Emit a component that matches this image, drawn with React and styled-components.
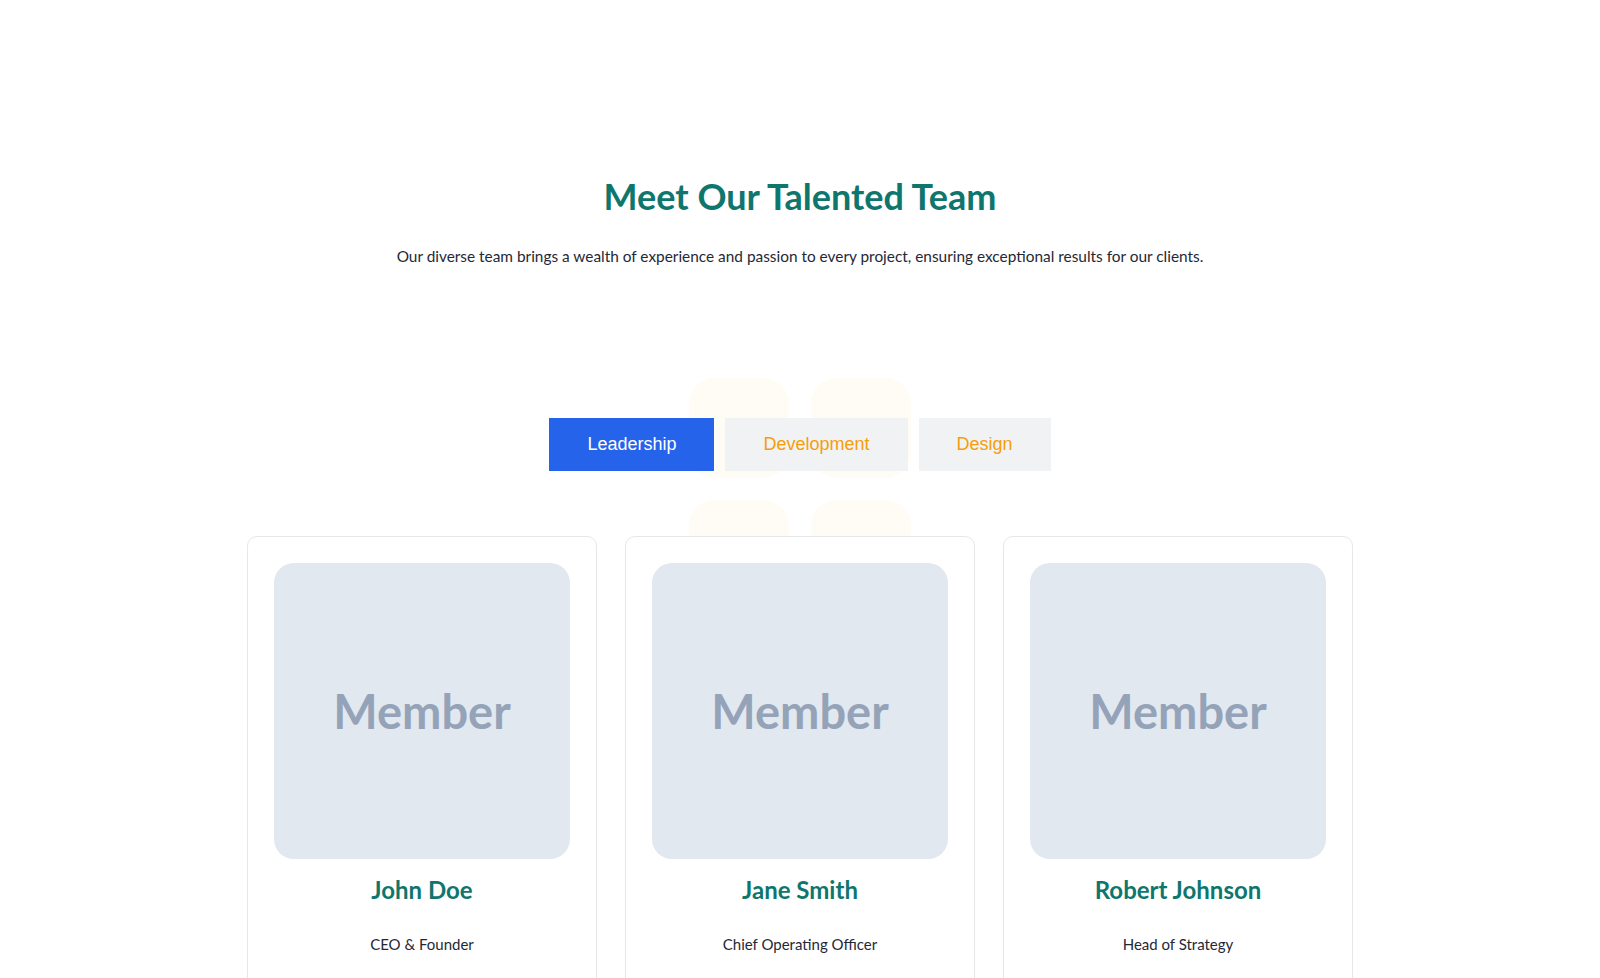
import React, {useState} from 'react';
import styled, {createGlobalStyle} from 'styled-components';

const GlobalStyle = createGlobalStyle`
  body {
    margin: 0;
    background: #fff;
    font-family: 'Lato', 'Noto Sans', sans-serif;
    color: #1f2937;
  }
`;

const Section = styled.section`
  padding: 174px 24px 0;
  text-align: center;
`;

const Title = styled.h2`
  margin: 0;
  font-size: 36px;
  line-height: 44px;
  font-weight: 700;
  color: #0f766e;
`;

const Subtitle = styled.p`
  margin: 26px 0 0;
  font-size: 15.4px;
  line-height: 24px;
  color: #1f2937;
`;

const Content = styled.div`
  position: relative;
  margin-top: 150px;
`;

const Decor = styled.div`
  position: absolute;
  top: -40px;
  left: 50%;
  margin-left: -111px;
  display: grid;
  grid-template-columns: repeat(2, 100px);
  gap: 22px;
  z-index: 0;
`;

const DecorSquare = styled.div`
  width: 100px;
  height: 100px;
  border-radius: 26px;
  background: #fefcf4;
`;

const Tabs = styled.div`
  position: relative;
  z-index: 1;
  display: flex;
  justify-content: center;
  gap: 11px;
`;

const Tab = styled.button`
  border: none;
  border-radius: 0;
  padding: 16px 38px;
  font-family: 'Liberation Sans', Arial, sans-serif;
  font-size: 18px;
  line-height: 21px;
  cursor: pointer;
  background: ${p => (p.$active ? '#2563eb' : '#f1f2f4')};
  color: ${p => (p.$active ? '#fff' : '#f59e0b')};
`;

const Cards = styled.div`
  position: relative;
  z-index: 1;
  margin-top: 65px;
  display: grid;
  grid-template-columns: repeat(3, 350px);
  gap: 28px;
  justify-content: center;
`;

const Card = styled.div`
  box-sizing: border-box;
  background: #fff;
  border: 1px solid #e5e7eb;
  border-radius: 10px;
  padding: 26px 26px 40px;
`;

const Photo = styled.div`
  height: 296px;
  border-radius: 20px;
  background: #e2e8f0;
  display: flex;
  align-items: center;
  justify-content: center;
  font-family: 'Lato', sans-serif;
  font-weight: 700;
  font-size: 47px;
  color: #94a3b8;
`;

const Name = styled.h3`
  margin: 16px 0 0;
  font-size: 24px;
  line-height: 30px;
  font-weight: 700;
  color: #0f766e;
`;

const Role = styled.p`
  margin: 27px 0 0;
  font-size: 15px;
  line-height: 24px;
  color: #1f2937;
`;

const TEAM = {
  Leadership: [
    {name: 'John Doe', role: 'CEO & Founder'},
    {name: 'Jane Smith', role: 'Chief Operating Officer'},
    {name: 'Robert Johnson', role: 'Head of Strategy'},
  ],
  Development: [
    {name: 'Emily Davis', role: 'Lead Developer'},
    {name: 'Michael Brown', role: 'Backend Engineer'},
    {name: 'Sarah Wilson', role: 'Frontend Engineer'},
  ],
  Design: [
    {name: 'David Lee', role: 'Creative Director'},
    {name: 'Laura Kim', role: 'UI Designer'},
    {name: 'Chris Martin', role: 'UX Researcher'},
  ],
};

export default function App() {
  const [tab, setTab] = useState('Leadership');

  return (
    <>
      <GlobalStyle />
      <Section>
        <Title>Meet Our Talented Team</Title>
        <Subtitle>
          Our diverse team brings a wealth of experience and passion to every project, ensuring exceptional results for our clients.
        </Subtitle>
        <Content>
          <Decor>
            <DecorSquare />
            <DecorSquare />
            <DecorSquare />
            <DecorSquare />
          </Decor>
          <Tabs>
            {Object.keys(TEAM).map(key => (
              <Tab key={key} $active={tab === key} onClick={() => setTab(key)}>
                {key}
              </Tab>
            ))}
          </Tabs>
          <Cards>
            {TEAM[tab].map(member => (
              <Card key={member.name}>
                <Photo>Member</Photo>
                <Name>{member.name}</Name>
                <Role>{member.role}</Role>
              </Card>
            ))}
          </Cards>
        </Content>
      </Section>
    </>
  );
}
